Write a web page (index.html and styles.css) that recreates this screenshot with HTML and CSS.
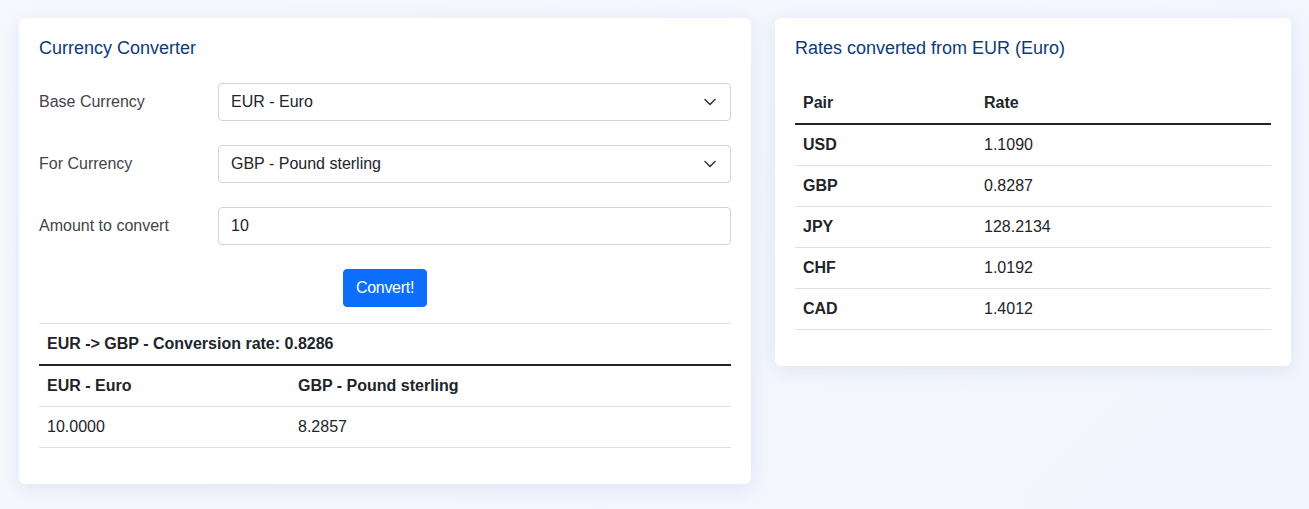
FILE: index.html
```html
<!DOCTYPE html>
<html lang="en">
<head>
<meta charset="utf-8">
<title>Currency Converter</title>
<link rel="stylesheet" href="styles.css">
</head>
<body>
<main class="page">
  <section class="card card-left">
    <h2 class="card-title">Currency Converter</h2>
    <div class="form-row">
      <label class="form-label">Base Currency</label>
      <div class="select">
        <span>EUR - Euro</span>
        <svg class="chev" width="12" height="8" viewBox="0 0 12 8"><path d="M1 1.5l5 5 5-5" fill="none" stroke="#343a40" stroke-width="1.6" stroke-linecap="round" stroke-linejoin="round"/></svg>
      </div>
    </div>
    <div class="form-row">
      <label class="form-label">For Currency</label>
      <div class="select">
        <span>GBP - Pound sterling</span>
        <svg class="chev" width="12" height="8" viewBox="0 0 12 8"><path d="M1 1.5l5 5 5-5" fill="none" stroke="#343a40" stroke-width="1.6" stroke-linecap="round" stroke-linejoin="round"/></svg>
      </div>
    </div>
    <div class="form-row">
      <label class="form-label">Amount to convert</label>
      <div class="input"><span>10</span></div>
    </div>
    <div class="btn-row">
      <button class="btn">Convert!</button>
    </div>
    <table class="table conv">
      <thead>
        <tr><th colspan="2">EUR -&gt; GBP - Conversion rate: 0.8286</th></tr>
      </thead>
      <tbody>
        <tr><th class="c1">EUR - Euro</th><th>GBP - Pound sterling</th></tr>
        <tr><td class="c1">10.0000</td><td>8.2857</td></tr>
      </tbody>
    </table>
  </section>
  <section class="card card-right">
    <h2 class="card-title">Rates converted from EUR (Euro)</h2>
    <table class="table rates">
      <thead>
        <tr><th class="r1">Pair</th><th>Rate</th></tr>
      </thead>
      <tbody>
        <tr><th class="r1">USD</th><td>1.1090</td></tr>
        <tr><th class="r1">GBP</th><td>0.8287</td></tr>
        <tr><th class="r1">JPY</th><td>128.2134</td></tr>
        <tr><th class="r1">CHF</th><td>1.0192</td></tr>
        <tr><th class="r1">CAD</th><td>1.4012</td></tr>
      </tbody>
    </table>
  </section>
</main>
</body>
</html>
```
FILE: styles.css
```css
* { box-sizing: border-box; }
html, body { margin: 0; padding: 0; }
body {
  background: linear-gradient(135deg, #f6f8fd 0%, #f2f5fd 100%);
  font-family: "Liberation Sans", Arial, sans-serif;
  font-size: 16px;
  line-height: 24px;
  color: #212529;
  height: 509px;
  overflow: hidden;
}
.page {
  display: grid;
  grid-template-columns: 732px 516px;
  column-gap: 24px;
  align-items: start;
  padding: 18px 0 0 19px;
}
.card {
  background: #fff;
  border-radius: 6px;
  box-shadow: 0 4px 18px rgba(180, 195, 230, 0.35);
  padding: 20px;
}
.card-title {
  margin: 0 0 25px 0;
  font-size: 18px;
  font-weight: 400;
  line-height: 20px;
  color: #0e3a78;
}
.form-row {
  display: grid;
  grid-template-columns: 179px 1fr;
  align-items: center;
  margin-bottom: 24px;
}
.form-label { color: #3f4449; }
.select, .input {
  height: 38px;
  border: 1px solid #ced4da;
  border-radius: 4px;
  padding: 6px 14px 6px 12px;
  display: flex;
  align-items: center;
  justify-content: space-between;
  color: #212529;
  background: #fff;
}
.chev { display: block; }
.btn-row {
  display: flex;
  justify-content: center;
  margin-bottom: 16px;
}
.btn {
  height: 38px;
  padding: 6px 12px;
  border: 1px solid #0d6efd;
  background: #0d6efd;
  color: #fff;
  border-radius: 4px;
  font-family: "Liberation Sans", Arial, sans-serif;
  font-size: 16px;
  line-height: 24px;
  letter-spacing: -0.3px;
}
.table {
  width: 100%;
  border-collapse: collapse;
  margin-bottom: 16px;
}
.table th, .table td {
  padding: 8px;
  text-align: left;
  border-bottom: 1px solid #dee2e6;
  line-height: 24px;
}
.table th { font-weight: 700; }
.table td { font-weight: 400; }
.table tbody { border-top: 2px solid #212529; }
.table thead th { border-bottom: none; }
.conv { border-top: 1px solid #dee2e6; }
.conv .c1 { width: 251px; }
.rates .r1 { width: 181px; }
```
